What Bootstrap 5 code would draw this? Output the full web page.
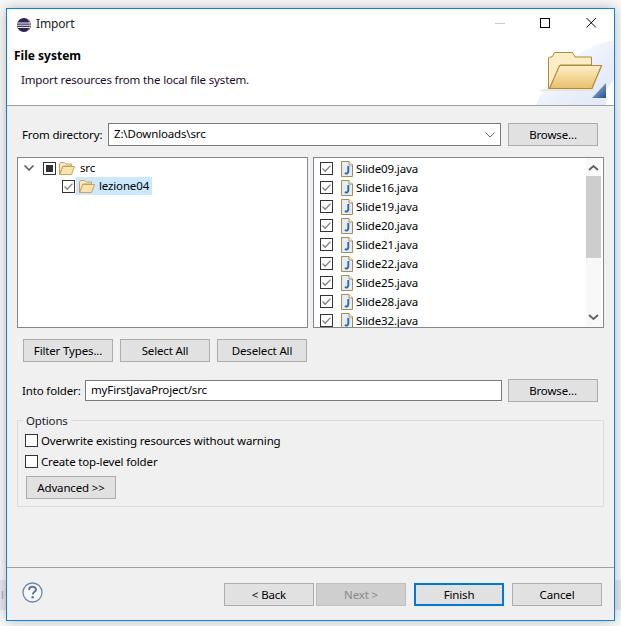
<!DOCTYPE html>
<html lang="en"><head><meta charset="utf-8"><title>Import</title>
<link href="https://cdn.jsdelivr.net/npm/bootstrap@5.3.0/dist/css/bootstrap.min.css" rel="stylesheet">
<style>
html,body{height:626px;overflow:hidden}
body{background:#fafafa;font-family:"Noto Sans","Open Sans",sans-serif;font-size:11.5px;letter-spacing:-.15px;line-height:16px;color:#000;position:relative}
.bgstrip{position:absolute;left:0;right:0;top:580px;height:30px;background:#e8e8ee;color:#aaa;line-height:30px;padding-left:1px}
.win{position:relative;margin:8px 6px 0;width:609px;height:613px;border:1px solid #0a84dd;background:#f0f0f0;box-shadow:0 0 12px rgba(0,0,0,.28)}
.tbar{height:31px;background:#fff;padding-left:10px;color:#222}
.wttl{margin-left:5px;font-size:12px;margin-top:-1px}
.winbtns{position:absolute;top:9px;right:7px}
.hdr{height:66px;background:#fff;border-bottom:1px solid #a0a0a0;position:relative}
.hdr-title{font-weight:700;font-size:12px;letter-spacing:0;padding:8px 0 0 7px}
.hdr-sub{padding:8px 0 0 14px;color:#1c0a2a}
.banner{position:absolute;right:0;top:0;width:78px;height:65px}
.frow{display:flex;align-items:flex-start;padding-left:15px}
.flabel{line-height:23px;white-space:nowrap}
.inp{background:#fff;border:1px solid #7a7a7a;padding-left:5px;height:23px;line-height:19px;position:relative}
.wbtn{display:block;flex:none;width:90px;height:23px;border:1px solid #adadad;background:#e1e1e1;font-size:11.5px;letter-spacing:-.15px;line-height:20px;padding:0;color:#000;text-align:center;border-radius:0}
.wbtn.off{background:#cfcfcf;color:#8a8a8a;border-color:#bfbfbf}
.wbtn.def{border:2px solid #0078d7;line-height:18px}
.panes{display:flex;gap:5px;margin:11px 0 0 10px}
.pane{width:291px;height:171px;border:1px solid #828790;background:#fff;overflow:hidden;position:relative;padding-top:1px}
.trow{display:flex;align-items:center;height:18px;white-space:nowrap}
.lrow{display:flex;align-items:center;height:19px;padding-left:6px;white-space:nowrap}
.ck{display:block;flex:none;width:13px;height:13px}
.sel{background:#cce8ff;display:flex;align-items:center;height:18px;padding:0 1px 0 3px;width:76px;margin-left:1px}
.sb{position:absolute;right:2px;top:0;bottom:0;width:15px;background:#f8f8f8}
.sbth{position:absolute;top:18px;left:0;width:15px;height:82px;background:#cdcdcd}
.sbar{position:absolute;left:0;width:15px}
.btnrow{display:flex;gap:7px;margin:11px 0 0 16px}
.optbox{position:relative;margin:18px 0 0 10px;width:587px;height:87px;border:1px solid #dcdcdc;padding:9px 0 0 7px}
.optleg{position:absolute;left:5px;top:-8px;background:#f0f0f0;padding:0 3px;color:#1a1a2a;line-height:16px}
.optrow{display:flex;align-items:center;height:21px;gap:3px}
.uck{display:block;flex:none;width:13px;height:13px;background:#fff;border:1px solid #333}
.advb{margin:4px 0 0 1px}
.ftr{position:absolute;left:0;right:0;top:558px;height:54px;border-top:1px solid #a0a0a0}
.ftbtns{position:absolute;top:15px;left:217px;display:flex;gap:2px}
.gap6{margin-left:6px}
.helpic{position:absolute;left:15px;top:14px}
.lbltxt{margin-left:3px}
.jic{margin-left:8px}
.intolbl{width:63px;line-height:21px;margin-top:1px}
.intoinp{width:417px;height:21px;line-height:18px;margin:1px 6px 0 0}
</style></head>
<body>
<div class="bgstrip">l</div>
<svg width="0" height="0" class="position-absolute">
<defs>
<linearGradient id="fg" x1="0" y1="0" x2="0" y2="1"><stop offset="0" stop-color="#fdf0c8"/><stop offset="1" stop-color="#e9bf6c"/></linearGradient>
<linearGradient id="fb" x1="0" y1="0" x2="1" y2="1"><stop offset="0" stop-color="#f3f6fc" stop-opacity="0"/><stop offset=".6" stop-color="#e9effa"/><stop offset="1" stop-color="#dfe8f7"/></linearGradient>
<linearGradient id="tri" x1="0" y1="0" x2="1" y2="1"><stop offset="0" stop-color="#b5c8e4"/><stop offset="1" stop-color="#1f4f95"/></linearGradient>
<symbol id="chk" viewBox="0 0 13 13"><rect x=".5" y=".5" width="12" height="12" fill="#fff" stroke="#333"/><path d="M2.500 6.500 5.200 9.200 10.500 3.600" fill="none" stroke="#808080" stroke-width="1.300"/></symbol>
<symbol id="jf" viewBox="0 0 12 16"><path d="M.5.5H8L11.500 4V15.500H.5Z" fill="#e4edf7" stroke="#a98c4e"/><path d="M8 .5V4H11.500" fill="#fff" stroke="#a98c4e"/><path d="M7.300 5V10.600C7.300 12.300 5.800 12.800 3.800 12.200" fill="none" stroke="#2f66a8" stroke-width="1.900"/></symbol>
<symbol id="sfold" viewBox="0 0 16 13"><path d="M.5 12.500V2L1.500.5H5.500L7 2H12.500V4H4L.5 12.500Z" fill="#fbe9c3" stroke="#c9a25a"/><path d="M.8 12.500 3.800 4.500H15.500L12.500 12.500Z" fill="#fbe3ae" stroke="#c9a25a"/></symbol>
</defs></svg>
<div class="win">
  <div class="tbar d-flex align-items-center">
    <svg width="14" height="14" viewBox="0 0 14 14" class="flex-none"><circle cx="7" cy="7" r="7" fill="#2c2255"/><path d="M9 .5A7 7 0 0 1 9 13.500A7.500 7.500 0 0 0 9 .5Z" fill="#e8a33d"/><path d="M.6 5H13.400M.3 7.200H13.700M.8 9.400H13.200" stroke="#fff" stroke-width="1"/></svg>
    <span class="wttl">Import</span>
    <div class="winbtns d-flex">
      <svg width="120" height="12" viewBox="0 0 120 12"><path d="M8 5.500H18" stroke="#ccc"/><rect x="53.500" y=".5" width="9" height="9" fill="none" stroke="#000"/><path d="M99.500 0 109 9.500M109 0 99.500 9.500" stroke="#000"/></svg>
    </div>
  </div>
  <div class="hdr">
    <div class="hdr-title">File system</div>
    <div class="hdr-sub">Import resources from the local file system.</div>
    <svg class="banner" viewBox="0 0 78 65">
      <path d="M78 0C48 5 14 30 0 65H70V50L78 40Z" fill="url(#fb)"/>
      <path d="M8 49 60 49 56 51 2 51Z" fill="#e6e0d0" opacity=".7"/>
      <path d="M12.500 48.500V18L13.500 17H16L18.500 12.500H36.500L39 17H55.500V25H24L17 48.500Z" fill="#fbeec4" stroke="#ad8b3e"/>
      <path d="M13.500 48.500 23.500 25.500H65.500L56 48.500Z" fill="url(#fg)" stroke="#ad8b3e" stroke-width="1.200"/>
      <path d="M56 58 70 43V58Z" fill="url(#tri)"/>
    </svg>
  </div>
  <div class="frow" style="margin-top:17px">
    <span class="flabel" style="width:86px">From directory:</span>
    <div class="inp" style="width:393px;margin-right:7px">Z:\Downloads\src
      <svg width="10" height="6" viewBox="0 0 10 6" class="position-absolute" style="right:5px;top:8px"><path d="M.5.5 5 5 9.500.5" fill="none" stroke="#666"/></svg>
    </div>
    <button class="wbtn" type="button">Browse...</button>
  </div>
  <div class="panes">
    <div class="pane">
      <div class="trow" style="padding-left:6px">
        <svg width="10" height="6" viewBox="0 0 10 6" class="flex-none"><path d="M.5.5 5 5 9.500.5" fill="none" stroke="#555" stroke-width="1.500"/></svg>
        <svg width="13" height="13" viewBox="0 0 13 13" class="flex-none" style="margin-left:9px"><rect x=".5" y=".5" width="12" height="12" fill="#fff" stroke="#333"/><rect x="3" y="3" width="7" height="7" fill="#333"/></svg>
        <svg width="16" height="13" class="flex-none" style="margin-left:3px"><use href="#sfold"/></svg>
        <span style="margin-left:5px">src</span>
      </div>
      <div class="trow" style="padding-left:44px">
        <svg width="13" height="13" class="flex-none"><use href="#chk"/></svg>
        <div class="sel"><svg width="16" height="13" class="flex-none"><use href="#sfold"/></svg><span style="margin-left:4px">lezione04</span></div>
      </div>
    </div>
    <div class="pane">
      <div class="lrow"><svg class="ck"><use href="#chk"/></svg><svg width="12" height="16" class="flex-none jic"><use href="#jf"/></svg><span class="lbltxt">Slide09.java</span></div>
      <div class="lrow"><svg class="ck"><use href="#chk"/></svg><svg width="12" height="16" class="flex-none jic"><use href="#jf"/></svg><span class="lbltxt">Slide16.java</span></div>
      <div class="lrow"><svg class="ck"><use href="#chk"/></svg><svg width="12" height="16" class="flex-none jic"><use href="#jf"/></svg><span class="lbltxt">Slide19.java</span></div>
      <div class="lrow"><svg class="ck"><use href="#chk"/></svg><svg width="12" height="16" class="flex-none jic"><use href="#jf"/></svg><span class="lbltxt">Slide20.java</span></div>
      <div class="lrow"><svg class="ck"><use href="#chk"/></svg><svg width="12" height="16" class="flex-none jic"><use href="#jf"/></svg><span class="lbltxt">Slide21.java</span></div>
      <div class="lrow"><svg class="ck"><use href="#chk"/></svg><svg width="12" height="16" class="flex-none jic"><use href="#jf"/></svg><span class="lbltxt">Slide22.java</span></div>
      <div class="lrow"><svg class="ck"><use href="#chk"/></svg><svg width="12" height="16" class="flex-none jic"><use href="#jf"/></svg><span class="lbltxt">Slide25.java</span></div>
      <div class="lrow"><svg class="ck"><use href="#chk"/></svg><svg width="12" height="16" class="flex-none jic"><use href="#jf"/></svg><span class="lbltxt">Slide28.java</span></div>
      <div class="lrow"><svg class="ck"><use href="#chk"/></svg><svg width="12" height="16" class="flex-none jic"><use href="#jf"/></svg><span class="lbltxt">Slide32.java</span></div>
      <div class="sb">
        <svg class="sbar" style="top:7px" width="15" height="6" viewBox="0 0 15 6"><path d="M3 5 7.500 1 12 5" fill="none" stroke="#606060" stroke-width="1.800"/></svg>
        <div class="sbth"></div>
        <svg class="sbar" style="bottom:7px" width="15" height="6" viewBox="0 0 15 6"><path d="M3 1 7.500 5 12 1" fill="none" stroke="#606060" stroke-width="1.800"/></svg>
      </div>
    </div>
  </div>
  <div class="btnrow">
    <button class="wbtn" type="button">Filter Types...</button>
    <button class="wbtn" type="button">Select All</button>
    <button class="wbtn" type="button">Deselect All</button>
  </div>
  <div class="frow" style="margin-top:17px">
    <span class="flabel intolbl">Into folder:</span>
    <div class="inp intoinp">myFirstJavaProject/src</div>
    <button class="wbtn" type="button">Browse...</button>
  </div>
  <div class="optbox">
    <div class="optleg">Options</div>
    <div class="optrow"><span class="uck"></span><span>Overwrite existing resources without warning</span></div>
    <div class="optrow"><span class="uck"></span><span>Create top-level folder</span></div>
    <button class="wbtn advb" type="button">Advanced &gt;&gt;</button>
  </div>
  <div class="ftr">
    <svg class="helpic" width="21" height="21" viewBox="0 0 21 21"><circle cx="10.500" cy="10.500" r="9.500" fill="#f6f7f9" stroke="#7286a5" stroke-width="1.300"/><path d="M7 8C7 5.600 8.700 4.800 10.500 4.800 12.400 4.800 14 5.900 14 7.700 14 9.800 10.800 10 10.800 12.500" fill="none" stroke="#66758f" stroke-width="1.900"/><circle cx="10.700" cy="15.300" r="1.300" fill="#66758f"/></svg>
    <div class="ftbtns">
      <button class="wbtn" type="button">&lt; Back</button>
      <button class="wbtn off" type="button">Next &gt;</button>
      <button class="wbtn def gap6" type="button">Finish</button>
      <button class="wbtn gap6" type="button">Cancel</button>
    </div>
  </div>
</div>
</body></html>
